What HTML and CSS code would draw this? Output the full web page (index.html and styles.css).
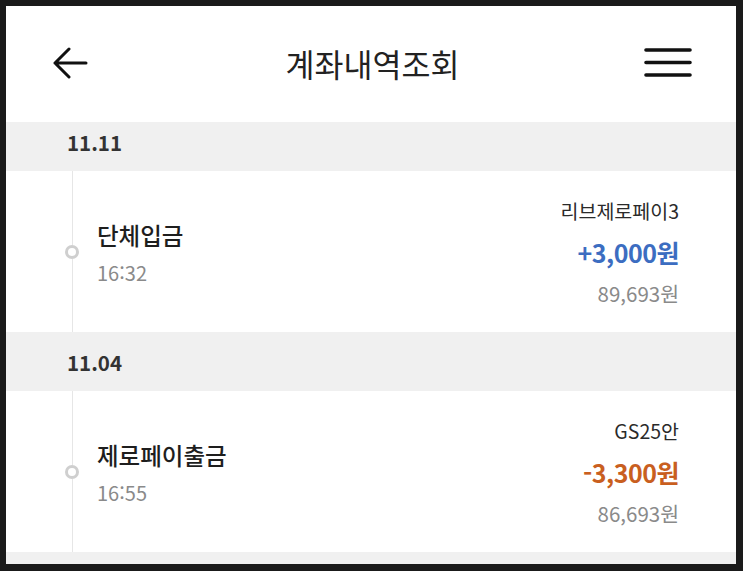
FILE: index.html
```html
<!DOCTYPE html>
<html lang="ko">
<head>
<meta charset="utf-8">
<title>계좌내역조회</title>
<link rel="stylesheet" href="styles.css">
</head>
<body>
<div class="screen">
  <header class="topbar">
    <button class="icon-btn back" aria-label="뒤로">
      <svg width="36" height="32" viewBox="0 0 36 32"><path d="M34 16H3M17 2L3 16L17 30" fill="none" stroke="#111" stroke-width="3" stroke-linecap="round" stroke-linejoin="round"/></svg>
    </button>
    <h1 class="title">계좌내역조회</h1>
    <button class="icon-btn menu" aria-label="메뉴">
      <svg width="50" height="32" viewBox="0 0 50 32"><path d="M3 4H47M3 16.5H47M3 29H47" fill="none" stroke="#111" stroke-width="3.6" stroke-linecap="round"/></svg>
    </button>
  </header>
  <main class="scroller">
    <div class="list">
      <div class="date-band">11.11</div>
      <div class="tx">
        <div class="rail"><div class="track"><span class="dot"></span></div></div>
        <div class="tx-main">
          <div class="tx-name">단체입금</div>
          <div class="tx-time">16:32</div>
        </div>
        <div class="tx-side">
          <div class="tx-memo">리브제로페이3</div>
          <div class="tx-amount plus">+3,000원</div>
          <div class="tx-balance">89,693원</div>
        </div>
      </div>
      <div class="date-band">11.04</div>
      <div class="tx">
        <div class="rail"><div class="track"><span class="dot"></span></div></div>
        <div class="tx-main">
          <div class="tx-name">제로페이출금</div>
          <div class="tx-time">16:55</div>
        </div>
        <div class="tx-side">
          <div class="tx-memo">GS25안</div>
          <div class="tx-amount minus">-3,300원</div>
          <div class="tx-balance">86,693원</div>
        </div>
      </div>
      <div class="date-band"></div>
    </div>
  </main>
</div>
</body>
</html>
```
FILE: styles.css
```css
* { box-sizing: border-box; }
html, body { margin: 0; padding: 0; }
body {
  background: #1a1a1a;
  padding: 6px 7px 7px 6px;
  font-family: "Noto Sans CJK KR", "Noto Sans", sans-serif;
  color: #222;
}
.screen {
  width: 730px;
  height: 558px;
  background: #fff;
  overflow: hidden;
  display: flex;
  flex-direction: column;
}
.topbar {
  height: 116px;
  flex: none;
  display: grid;
  grid-template-columns: 1fr auto 1fr;
  align-items: center;
  padding: 0 43px 0 46px;
  background: #fff;
}
.icon-btn {
  border: 0;
  background: none;
  padding: 0;
  display: flex;
  margin-top: -2px;
}
.back { justify-self: start; }
.menu { justify-self: end; margin-top: -4px; }
.title {
  margin: 0;
  margin-top: -2px;
  font-size: 31.5px;
  font-weight: 400;
  color: #222;
}
.scroller {
  flex: 1;
  overflow: hidden;
}
.list { margin-top: -10px; }
.date-band {
  height: 59px;
  background: #f0f0f0;
  display: flex;
  align-items: center;
  padding-left: 61px;
  font-size: 20.5px;
  font-weight: 700;
  color: #333;
}
.tx {
  height: 161px;
  display: flex;
  align-items: stretch;
}
.rail {
  width: 91px;
  flex: none;
  display: flex;
}
.track {
  margin-left: 59px;
  width: 14px;
  display: flex;
  flex-direction: column;
  align-items: center;
}
.track::before {
  content: "";
  width: 1px;
  height: 74px;
  background: #e6e6e6;
}
.track::after {
  content: "";
  width: 1px;
  flex: 1;
  background: #e6e6e6;
}
.dot {
  width: 14px;
  height: 14px;
  border: 3px solid #cfcfcf;
  border-radius: 50%;
  background: #fff;
  flex: none;
}
.tx-main {
  flex: 1;
  padding-top: 47px;
}
.tx-name {
  font-size: 23.5px;
  line-height: 34px;
  font-weight: 500;
  color: #1e1e1e;
}
.tx-time {
  margin-top: 7px;
  font-size: 20px;
  line-height: 28px;
  color: #8a8a8a;
}
.tx-side {
  padding: 26px 57px 0 0;
  text-align: right;
}
.tx-memo {
  font-size: 19.5px;
  line-height: 28px;
  color: #2a2a2a;
}
.tx-amount {
  margin-top: 9px;
  font-size: 25px;
  line-height: 36px;
  font-weight: 700;
  letter-spacing: -0.5px;
}
.tx-amount.plus { color: #3c6dc1; }
.tx-amount.minus { color: #c95f1f; }
.tx-balance {
  margin-top: 9px;
  font-size: 20.5px;
  line-height: 28px;
  color: #8a8a8a;
}
```
